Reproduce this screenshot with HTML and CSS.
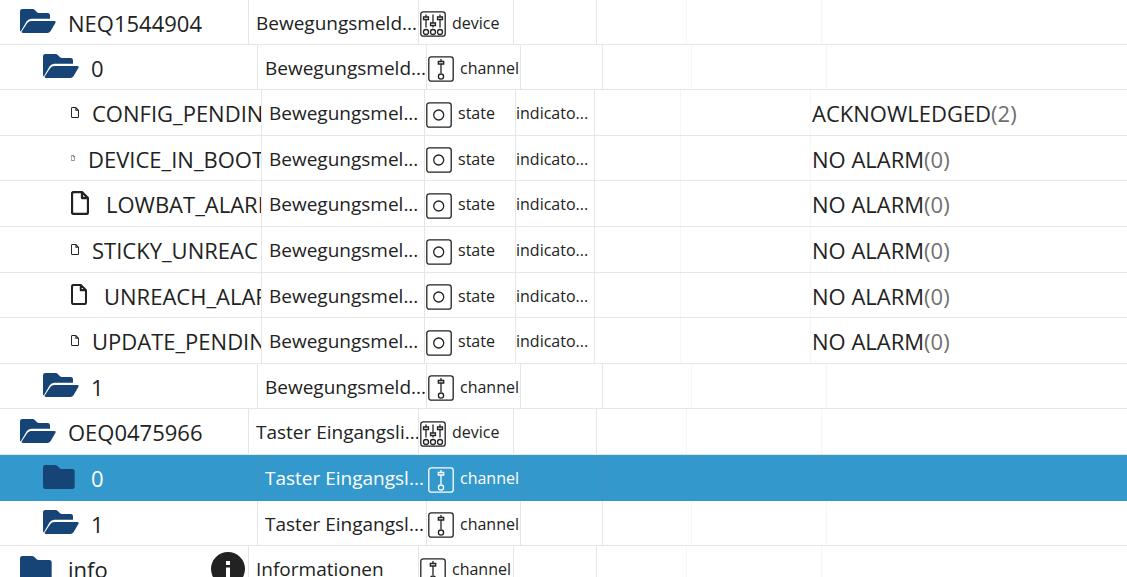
FILE: index.html
```html
<!DOCTYPE html>
<html lang="de">
<head>
    <meta charset="UTF-8">
    <meta name="viewport" content="width=device-width, initial-scale=1.0">
    <title>Objekte</title>
    <link rel="stylesheet" href="styles.css">
</head>
<body>

<svg class="sprite" aria-hidden="true">
    <symbol id="folder-open" viewBox="0 0 108 72">
        <path d="M0 64V7Q0 0 7 0H38Q42 0 45 4L51 10Q53 12 57 12H83Q90 12 90 19V29H34Q25 29 20 37L3 66Q0 68 0 64Z"/>
        <path d="M34 36H103Q109 36 106 42L92 66Q88 72 82 72H9Q3 72 6 66L22 42Q26 36 34 36Z"/>
    </symbol>
    <symbol id="folder" viewBox="0 0 108 72">
        <path d="M0 7Q0 0 7 0H36Q40 0 43 3L49 9Q52 12 56 12H88Q95 12 95 19V65Q95 72 88 72H7Q0 72 0 65Z"/>
    </symbol>
    <symbol id="file" viewBox="0 0 18 24">
        <path d="M3 1H11L17 7V21Q17 23 15 23H3Q1 23 1 21V3Q1 1 3 1ZM11 1V7H17" fill="none" stroke="currentColor" stroke-width="2.3" stroke-linejoin="round"/>
    </symbol>
    <symbol id="device" viewBox="0 0 26 26">
        <g fill="none" stroke="currentColor" stroke-width="1.3">
            <rect x="0.8" y="0.8" width="24.4" height="24.4" rx="2.5"/>
            <path d="M6 3.5V6M6 8.5V16.5M3.5 6H8.5V8.5H3.5ZM13 3.5V12M13 14.5V16.5M10.5 12H15.5V14.5H10.5ZM20 3.5V6M20 8.5V16.5M17.5 6H22.5V8.5H17.5Z"/>
            <circle cx="6" cy="21" r="2.5"/>
            <circle cx="13" cy="21" r="2.5"/>
            <circle cx="20" cy="21" r="2.5"/>
        </g>
    </symbol>
    <symbol id="channel" viewBox="0 0 26 26">
        <g fill="none" stroke="currentColor" stroke-width="1.3">
            <rect x="0.8" y="0.8" width="24.4" height="24.4" rx="2.5"/>
            <path d="M13 3V5.5M13 8V17M10.3 5.5H15.7V8H10.3Z"/>
            <circle cx="13" cy="20.6" r="2.6"/>
        </g>
    </symbol>
    <symbol id="state" viewBox="0 0 26 26">
        <g fill="none" stroke="currentColor" stroke-width="1.3">
            <rect x="0.8" y="0.8" width="24.4" height="24.4" rx="2.5"/>
            <circle cx="12.7" cy="13" r="5"/>
        </g>
    </symbol>
    <symbol id="info" viewBox="0 0 34 34">
        <circle cx="17" cy="17" r="17"/>
        <path d="M15 9H19V13H15ZM15 15.5H19V26H15Z" fill="#fff"/>
    </symbol>
</svg>

<table class="objects">
    <tbody>
        <tr class="row level-0">
            <td class="name"><svg class="folder"><use href="#folder-open"/></svg><span>NEQ1544904</span></td>
            <td class="desc">Bewegungsmeld...</td>
            <td class="type"><svg class="type-icon"><use href="#device"/></svg>device</td>
            <td class="role"></td><td></td><td></td><td class="value"></td>
        </tr>
        <tr class="row level-1">
            <td class="name"><svg class="folder"><use href="#folder-open"/></svg><span>0</span></td>
            <td class="desc">Bewegungsmeld...</td>
            <td class="type"><svg class="type-icon"><use href="#channel"/></svg>channel</td>
            <td class="role"></td><td></td><td></td><td class="value"></td>
        </tr>
        <tr class="row level-2">
            <td class="name"><svg class="file file-small"><use href="#file"/></svg><span>CONFIG_PENDIN</span></td>
            <td class="desc">Bewegungsmel...</td>
            <td class="type"><svg class="type-icon"><use href="#state"/></svg>state</td>
            <td class="role">indicato...</td><td></td><td></td>
            <td class="value">ACKNOWLEDGED<span class="raw">(2)</span></td>
        </tr>
        <tr class="row level-2">
            <td class="name"><svg class="file file-tiny"><use href="#file"/></svg><span>DEVICE_IN_BOOT</span></td>
            <td class="desc">Bewegungsmel...</td>
            <td class="type"><svg class="type-icon"><use href="#state"/></svg>state</td>
            <td class="role">indicato...</td><td></td><td></td>
            <td class="value">NO ALARM<span class="raw">(0)</span></td>
        </tr>
        <tr class="row level-2">
            <td class="name"><svg class="file file-large"><use href="#file"/></svg><span>LOWBAT_ALARM</span></td>
            <td class="desc">Bewegungsmel...</td>
            <td class="type"><svg class="type-icon"><use href="#state"/></svg>state</td>
            <td class="role">indicato...</td><td></td><td></td>
            <td class="value">NO ALARM<span class="raw">(0)</span></td>
        </tr>
        <tr class="row level-2">
            <td class="name"><svg class="file file-small"><use href="#file"/></svg><span>STICKY_UNREAC</span></td>
            <td class="desc">Bewegungsmel...</td>
            <td class="type"><svg class="type-icon"><use href="#state"/></svg>state</td>
            <td class="role">indicato...</td><td></td><td></td>
            <td class="value">NO ALARM<span class="raw">(0)</span></td>
        </tr>
        <tr class="row level-2">
            <td class="name"><svg class="file file-medium"><use href="#file"/></svg><span>UNREACH_ALAR</span></td>
            <td class="desc">Bewegungsmel...</td>
            <td class="type"><svg class="type-icon"><use href="#state"/></svg>state</td>
            <td class="role">indicato...</td><td></td><td></td>
            <td class="value">NO ALARM<span class="raw">(0)</span></td>
        </tr>
        <tr class="row level-2">
            <td class="name"><svg class="file file-small"><use href="#file"/></svg><span>UPDATE_PENDIN</span></td>
            <td class="desc">Bewegungsmel...</td>
            <td class="type"><svg class="type-icon"><use href="#state"/></svg>state</td>
            <td class="role">indicato...</td><td></td><td></td>
            <td class="value">NO ALARM<span class="raw">(0)</span></td>
        </tr>
        <tr class="row level-1">
            <td class="name"><svg class="folder"><use href="#folder-open"/></svg><span>1</span></td>
            <td class="desc">Bewegungsmeld...</td>
            <td class="type"><svg class="type-icon"><use href="#channel"/></svg>channel</td>
            <td class="role"></td><td></td><td></td><td class="value"></td>
        </tr>
        <tr class="row level-0">
            <td class="name"><svg class="folder"><use href="#folder-open"/></svg><span>OEQ0475966</span></td>
            <td class="desc">Taster Eingangsli...</td>
            <td class="type"><svg class="type-icon"><use href="#device"/></svg>device</td>
            <td class="role"></td><td></td><td></td><td class="value"></td>
        </tr>
        <tr class="row level-1 selected">
            <td class="name"><svg class="folder"><use href="#folder"/></svg><span>0</span></td>
            <td class="desc">Taster Eingangsl...</td>
            <td class="type"><svg class="type-icon"><use href="#channel"/></svg>channel</td>
            <td class="role"></td><td></td><td></td><td class="value"></td>
        </tr>
        <tr class="row level-1">
            <td class="name"><svg class="folder"><use href="#folder-open"/></svg><span>1</span></td>
            <td class="desc">Taster Eingangsl...</td>
            <td class="type"><svg class="type-icon"><use href="#channel"/></svg>channel</td>
            <td class="role"></td><td></td><td></td><td class="value"></td>
        </tr>
        <tr class="row level-0">
            <td class="name"><svg class="folder"><use href="#folder"/></svg><span>info</span><svg class="info-icon"><use href="#info"/></svg></td>
            <td class="desc">Informationen</td>
            <td class="type"><svg class="type-icon"><use href="#channel"/></svg>channel</td>
            <td class="role"></td><td></td><td></td><td class="value"></td>
        </tr>
    </tbody>
</table>

</body>
</html>
```
FILE: styles.css
```css
* {
    box-sizing: border-box;
}
body {
    font-family: "Open Sans", "Segoe UI", sans-serif;
    margin: 0;
    height: 100vh;
    overflow: hidden;
    background-color: #ffffff;
    color: #222222;
}
.sprite {
    display: none;
}
.objects,
.objects tbody {
    display: block;
}
.row {
    display: grid;
    height: 46px;
    border-bottom: 1px solid #e6e6e6;
}
.row:nth-child(1),
.row:nth-child(2),
.row:nth-child(4),
.row:nth-child(7),
.row:nth-child(9),
.row:nth-child(12) {
    height: 45px;
}
.level-0 {
    grid-template-columns: 249fr 170fr 95fr 83fr 90fr 135fr 305fr;
}
.level-1 {
    grid-template-columns: 258fr 169fr 94fr 82fr 89fr 135fr 300fr;
}
.level-2 {
    grid-template-columns: 262fr 163fr 91fr 79fr 86fr 130fr 316fr;
}
td {
    display: flex;
    align-items: center;
    min-width: 0;
    padding: 1px 0 0;
    overflow: hidden;
    white-space: nowrap;
    border-right: 1px solid rgba(128, 128, 128, 0.2);
}
td:nth-child(5),
td:nth-child(6) {
    border-right-color: rgba(128, 128, 128, 0.07);
}
td:last-child {
    border-right: none;
}
svg {
    flex: none;
    fill: currentColor;
}
.name {
    gap: 12px;
    font-size: 22px;
}
.level-0 .name {
    padding-left: 20px;
}
.level-1 .name {
    padding-left: 43px;
}
.level-2 .name {
    gap: 13px;
    padding-left: 71px;
}
.desc {
    padding-left: 7px;
    font-size: 19px;
}
.type {
    gap: 6px;
    padding-left: 1px;
    font-size: 16px;
}
.role {
    font-size: 16px;
}
.value {
    padding-left: 1px;
    font-size: 22px;
}
.raw {
    color: #707070;
}
.folder {
    width: 36px;
    height: 24px;
    margin-bottom: 3px;
    color: #164477;
}
.file {
    margin-bottom: 2px;
}
.file-tiny {
    width: 4px;
    height: 6px;
}
.file-small {
    width: 8px;
    height: 11px;
}
.file-medium {
    width: 16px;
    height: 21px;
    margin-right: 4px;
}
.file-large {
    width: 18px;
    height: 24px;
    margin-right: 4px;
}
.type-icon {
    width: 26px;
    height: 26px;
    margin-top: 3px;
}
.info-icon {
    width: 34px;
    height: 34px;
    margin-left: auto;
    margin-right: 3px;
}
.selected {
    color: #ffffff;
    background-color: #3399cc;
    border-bottom-color: #3399cc;
}
```
